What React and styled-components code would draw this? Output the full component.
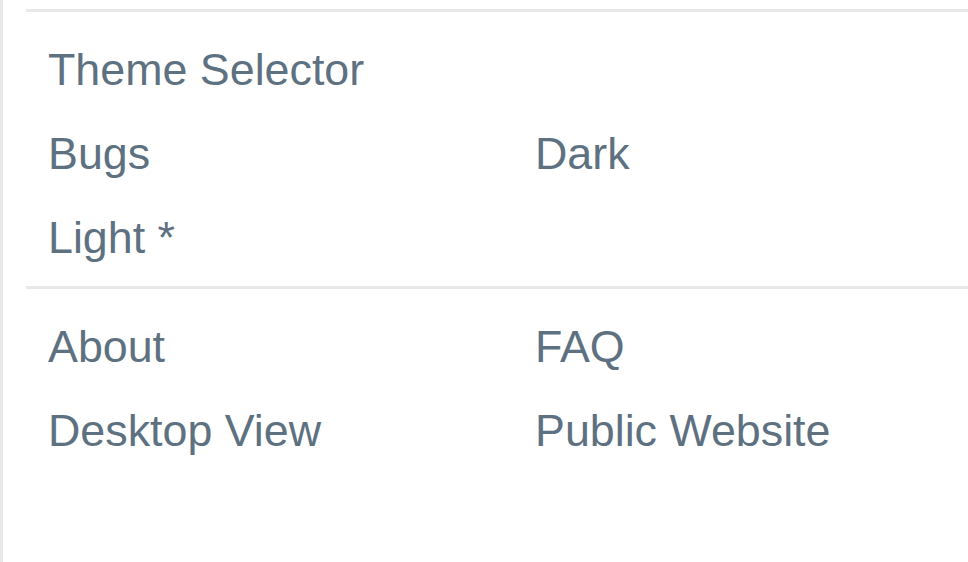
import styled, { createGlobalStyle } from "styled-components";

const GlobalStyle = createGlobalStyle`
  html, body {
    margin: 0;
    padding: 0;
    background: #ffffff;
  }
  body {
    font-family: "Liberation Sans", Arial, Helvetica, sans-serif;
  }
`;

const sections = [
  {
    rows: [["Theme Selector"], ["Bugs", "Dark"], ["Light *"]],
    bottom: 7,
  },
  {
    rows: [
      ["About", "FAQ"],
      ["Desktop View", "Public Website"],
    ],
    bottom: 0,
  },
];

const App = () => {
  return (
    <>
      <GlobalStyle />
      <Panel>
        {sections.map((section, i) => (
          <Section key={i} bottom={section.bottom}>
            {section.rows.map((row, j) => (
              <Row key={j}>
                {row.map((label) => (
                  <Item key={label}>{label}</Item>
                ))}
              </Row>
            ))}
          </Section>
        ))}
      </Panel>
    </>
  );
};

export default App;

const Panel = styled.div`
  height: 562px;
  box-sizing: border-box;
  border-left: 3px solid #e8e8e8;
  padding-top: 9px;
  padding-left: 23px;
  overflow: hidden;
`;

const Section = styled.div`
  border-top: 3px solid #e8e8e8;
  padding: 15px 0 ${({ bottom }) => bottom}px 22px;
`;

const Row = styled.div`
  display: grid;
  grid-template-columns: 487px 1fr;
  height: 84px;
`;

const Item = styled.div`
  font-size: 44.8px;
  line-height: 84px;
  color: #5e7181;
  white-space: nowrap;
`;
